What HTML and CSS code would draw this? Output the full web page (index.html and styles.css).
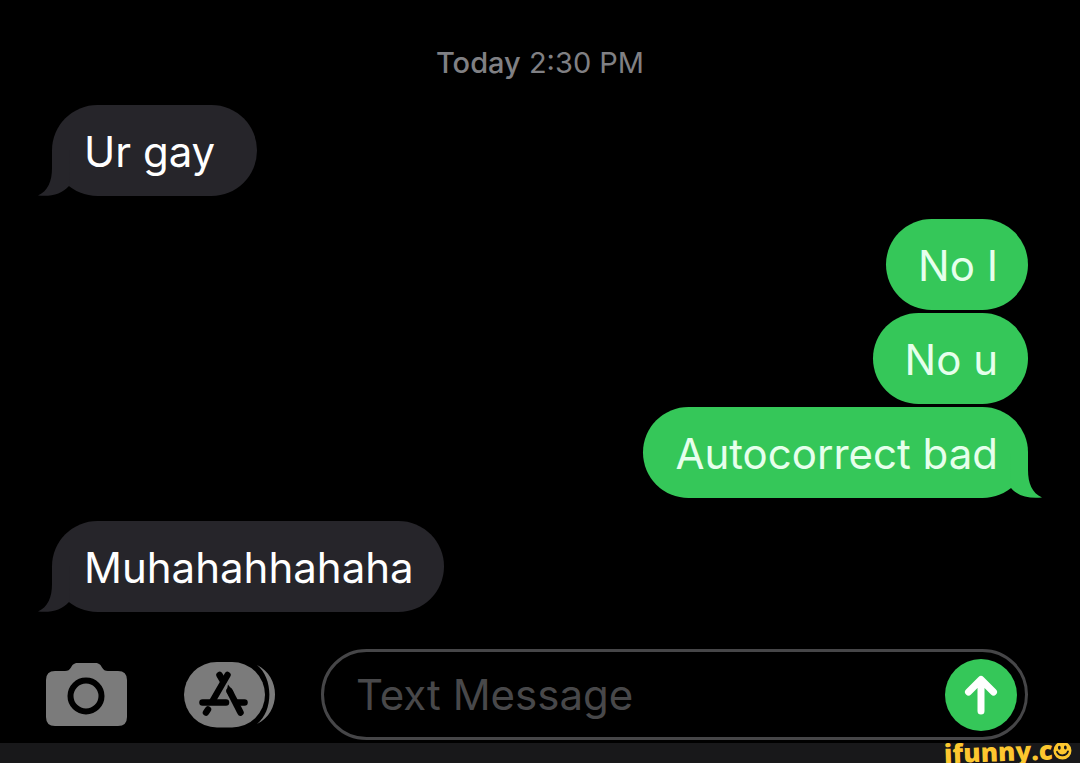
FILE: index.html
```html
<!DOCTYPE html>
<html lang="en">
  <head>
    <meta charset="UTF-8" />
    <meta name="viewport" content="width=device-width, initial-scale=1.0" />
    <title>Messages</title>
    <link rel="stylesheet" href="styles.css">
  </head>
  <body>
    <main class="chat">
      <p class="timestamp"><strong>Today</strong> 2:30 PM</p>

      <div class="group incoming">
        <div class="bubble">
          Ur gay&nbsp;
          <svg class="tail" viewBox="0 0 32 46" aria-hidden="true">
            <path d="M0 0H18V18C18 31 22 41 32 45.500C19 47 8 44 1 36Z" />
          </svg>
        </div>
      </div>

      <div class="group outgoing">
        <div class="bubble">No I</div>
        <div class="bubble">No u</div>
        <div class="bubble">
          Autocorrect bad
          <svg class="tail" viewBox="0 0 32 46" aria-hidden="true">
            <path d="M0 0H18V18C18 31 22 41 32 45.500C19 47 8 44 1 36Z" />
          </svg>
        </div>
      </div>

      <div class="group incoming">
        <div class="bubble">
          Muhahahhahaha
          <svg class="tail" viewBox="0 0 32 46" aria-hidden="true">
            <path d="M0 0H18V18C18 31 22 41 32 45.500C19 47 8 44 1 36Z" />
          </svg>
        </div>
      </div>
    </main>

    <form class="composer" onsubmit="return false;">
      <button class="icon-button" type="button" aria-label="Camera">
        <svg width="81" height="63" viewBox="0 0 81 63">
          <path fill="#7b7b7b" d="M9 8H19C22 8 23.500 7 25 4.500C26.500 1.500 28 0 32 0H49C53 0 54.500 1.500 56 4.500C57.500 7 59 8 62 8H72Q81 8 81 17V54Q81 63 72 63H9Q0 63 0 54V17Q0 8 9 8Z" />
          <circle cx="40" cy="33" r="15.500" fill="none" stroke="#000" stroke-width="6" />
        </svg>
      </button>
      <button class="icon-button" type="button" aria-label="Apps">
        <svg width="91" height="66" viewBox="0 0 91 66">
          <rect width="81" height="65.500" rx="33" fill="#7b7b7b" />
          <path fill="#7b7b7b" d="M73 3C97 15 97 50 73 62C89.500 49 89.500 16 73 3Z" />
          <g fill="none" stroke="#000" stroke-width="6.500" stroke-linecap="round" stroke-linejoin="round">
            <path d="M43.500 13L28.500 39" />
            <path d="M35.500 13L39 19" />
            <path d="M18.500 40.500H42" />
            <path d="M53 40.500H60.500" />
            <path d="M45.500 29L56.500 50.500" />
            <path d="M24 47.500L22 50.500" />
          </g>
          <path d="M44 22.500L49 29L52 44L42.500 30Z" />
        </svg>
      </button>
      <div class="field">
        <input type="text" placeholder="Text Message" aria-label="Text Message" />
        <button class="send" type="submit" aria-label="Send">
          <svg width="72" height="72" viewBox="0 0 72 72">
            <path d="M36 52V22M23.500 33L36 20.500L48.500 33" fill="none" stroke="#fff" stroke-width="7" stroke-linecap="round" stroke-linejoin="round" />
          </svg>
        </button>
      </div>
    </form>

    <footer class="strip">
      <div class="brand">
        <span>ifunny.c</span>
        <svg width="19" height="19" viewBox="0 0 19 19" aria-hidden="true">
          <circle cx="9.500" cy="9.500" r="9" fill="#fdc72f" />
          <ellipse cx="6.500" cy="6.500" rx="1.400" ry="2" fill="#18181a" />
          <ellipse cx="12.500" cy="6.500" rx="1.400" ry="2" fill="#18181a" />
          <path d="M4 10.500C6 15.500 13 15.500 15 10.500" fill="none" stroke="#18181a" stroke-width="1.800" stroke-linecap="round" />
        </svg>
      </div>
    </footer>
  </body>
</html>
```
FILE: styles.css
```css
* {
  box-sizing: border-box;
}

body {
  margin: 0;
  background: #000;
  color: #fff;
  font-family: Inter, "Liberation Sans", sans-serif;
  min-height: 100vh;
  display: flex;
  flex-direction: column;
}

.chat {
  padding: 44px 52px 0;
  display: flex;
  flex-direction: column;
  gap: 23px;
}

.timestamp {
  margin: 0;
  font-size: 29px;
  line-height: 38px;
  color: #808084;
  text-align: center;
}

.timestamp strong {
  font-weight: 500;
}

.group {
  display: flex;
  flex-direction: column;
  gap: 3px;
}

.incoming {
  align-items: flex-start;
}

.outgoing {
  align-items: flex-end;
}

.bubble {
  position: relative;
  padding: 21px 30px 19px 32px;
  border-radius: 46px;
  font-size: 42px;
  line-height: 51px;
}

.incoming .bubble {
  background: #26252a;
}

.outgoing .bubble {
  background: #35c759;
  color: #e6ffec;
}

.tail {
  position: absolute;
  bottom: 0;
  right: -14px;
  width: 32px;
  height: 46px;
  fill: #35c759;
}

.incoming .tail {
  right: auto;
  left: -14px;
  fill: #26252a;
  transform: scaleX(-1);
}

.composer {
  display: flex;
  align-items: center;
  padding: 37px 52px 3px 46px;
}

.icon-button {
  padding: 0;
  border: none;
  background: none;
  cursor: pointer;
}

.icon-button + .icon-button {
  margin-left: 57px;
}

.icon-button svg,
.send svg {
  display: block;
}

.field {
  flex: 1;
  min-width: 0;
  margin-left: 46px;
  display: flex;
  align-items: center;
  height: 91px;
  padding: 0 8px 0 32px;
  border: 3px solid #464648;
  border-radius: 46px;
}

.field input {
  flex: 1;
  min-width: 0;
  padding: 0;
  border: none;
  outline: none;
  background: none;
  color: #fff;
  font-family: inherit;
  font-size: 42px;
}

.field input::placeholder {
  color: #48484a;
  opacity: 1;
}

.send {
  width: 72px;
  height: 72px;
  padding: 0;
  border: none;
  border-radius: 50%;
  background: #35c759;
  cursor: pointer;
}

.strip {
  height: 20px;
  margin-top: auto;
  padding-right: 8px;
  background: #18181a;
  display: flex;
  justify-content: flex-end;
  overflow: hidden;
}

.brand {
  display: flex;
  color: #fdc72f;
  font-family: "Open Sans", sans-serif;
  font-size: 26px;
  font-weight: 800;
  line-height: 16px;
  transform: rotate(-2deg);
}
```
